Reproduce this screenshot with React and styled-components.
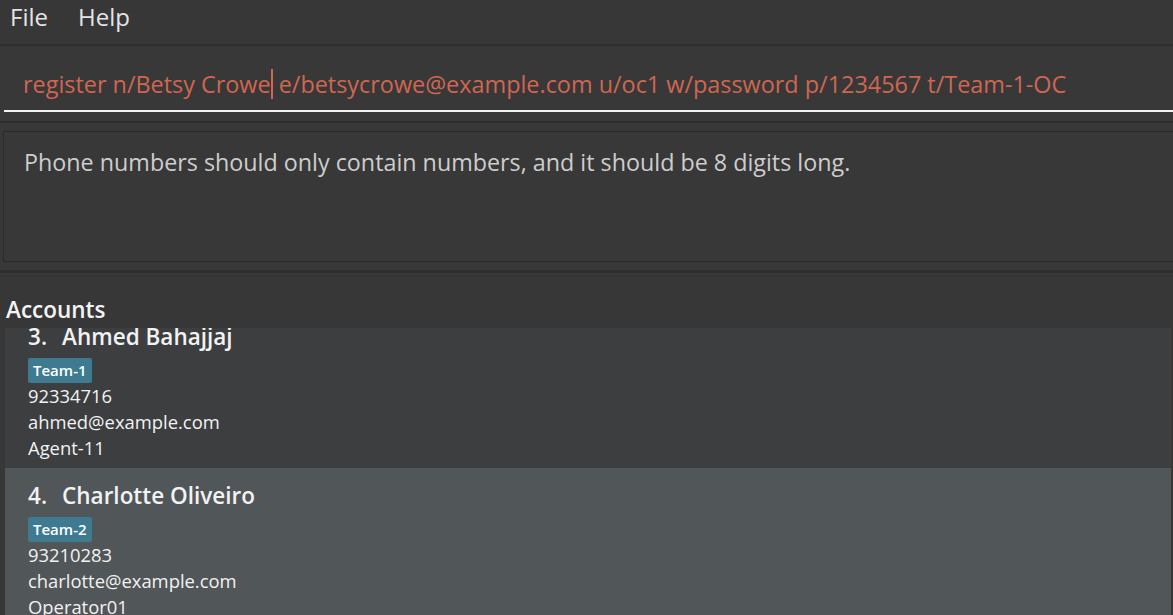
import styled, { createGlobalStyle } from "styled-components";

const GlobalStyle = createGlobalStyle`
    html, body {
        margin: 0;
        padding: 0;
        background: #383838;
    }
    body {
        font-family: "Open Sans", "Noto Sans", sans-serif;
        overflow: hidden;
    }
`

const Window = styled.div`
    display: flex;
    flex-direction: column;
    width: 1173px;
    height: 615px;
    overflow: hidden;
    background: #383838;
`

const MenuBar = styled.div`
    display: flex;
    align-items: flex-start;
    gap: 30px;
    height: 46px;
    box-sizing: border-box;
    padding: 1px 0 0 10px;
    background: #373737;
    border-bottom: 2px solid #2d2d2d;
`

const MenuItem = styled.span`
    font-size: 24px;
    line-height: 32px;
    color: #e4e4e4;
`

const CommandSection = styled.div`
    height: 75px;
    padding-left: 4px;
    border-bottom: 2px solid #2e2e2e;
`

const CommandBox = styled.div`
    display: flex;
    align-items: center;
    height: 66px;
    box-sizing: border-box;
    padding: 12px 0 0 19px;
    border-bottom: 2px solid #f2f2f2;
    font-size: 23.4px;
    color: #d06651;
    white-space: pre;
`

const Caret = styled.span`
    display: inline-block;
    width: 2px;
    height: 30px;
    background: #d06651;
`

const ResultSection = styled.div`
    padding: 8px 0 8px 3px;
    border-bottom: 2px solid #2e2e2e;
`

const ResultBox = styled.div`
    height: 131px;
    padding: 14px 20px;
    box-sizing: border-box;
    border: 1px solid #2b2b2b;
    border-right: none;
    font-size: 23.3px;
    line-height: 32px;
    color: #cdcdcd;
`

const Separator = styled.div`
    height: 2px;
    border-top: 1px solid #2e2e2e;
    border-bottom: 1px solid #333;
`

const AccountsPanel = styled.div`
    flex: 1;
    display: flex;
    flex-direction: column;
    min-height: 0;
    padding-top: 19px;
    background: #373737;
`

const PanelTitle = styled.div`
    height: 33px;
    padding-left: 6px;
    font-size: 22.5px;
    font-weight: 600;
    color: #f4f4f4;
    line-height: 30px;
`

const ListViewport = styled.div`
    flex: 1;
    min-height: 0;
    margin-left: 5px;
    margin-right: 2px;
    overflow: hidden;
`

const ListTrack = styled.div`
    margin-top: ${(p) => -p.$offset}px;
`

const Card = styled.div`
    height: 159px;
    box-sizing: border-box;
    padding: 14px 0 6px 23px;
    background: ${(p) => (p.$odd ? "#515658" : "#3c3e40")};
    color: #f2f2f2;
`

const NameRow = styled.div`
    display: flex;
    gap: 15px;
    height: 27px;
    line-height: 27px;
    font-size: 22.5px;
    font-weight: 600;
`

const Tags = styled.div`
    display: flex;
    gap: 6px;
    margin-top: 8px;
`

const Tag = styled.span`
    height: 25px;
    line-height: 25px;
    padding: 0 5px;
    border-radius: 2px;
    background: #3e7b91;
    color: #ffffff;
    font-size: 15px;
    font-weight: 600;
`

const Field = styled.div`
    height: 26px;
    line-height: 26px;
    font-size: 18.4px;
`

const accounts = [
    { id: 3, name: "Ahmed Bahajjaj", tags: ["Team-1"], phone: "92334716", email: "ahmed@example.com", role: "Agent-11" },
    { id: 4, name: "Charlotte Oliveiro", tags: ["Team-2"], phone: "93210283", email: "charlotte@example.com", role: "Operator01" },
]

function App() {
    return (
        <Window>
            <GlobalStyle />
            <MenuBar>
                <MenuItem>File</MenuItem>
                <MenuItem>Help</MenuItem>
            </MenuBar>
            <CommandSection>
                <CommandBox>
                    <span>register n/Betsy Crowe</span>
                    <Caret />
                    <span>{" e/betsycrowe@example.com u/oc1 w/password p/1234567 t/Team-1-OC"}</span>
                </CommandBox>
            </CommandSection>
            <ResultSection>
                <ResultBox>
                    Phone numbers should only contain numbers, and it should be 8 digits long.
                </ResultBox>
            </ResultSection>
            <Separator />
            <AccountsPanel>
                <PanelTitle>Accounts</PanelTitle>
                <ListViewport>
                    <ListTrack $offset={19}>
                        {accounts.map((a) => (
                            <Card key={a.id} $odd={a.id % 2 === 0}>
                                <NameRow>
                                    <span>{a.id}.</span>
                                    <span>{a.name}</span>
                                </NameRow>
                                <Tags>
                                    {a.tags.map((t) => (
                                        <Tag key={t}>{t}</Tag>
                                    ))}
                                </Tags>
                                <Field>{a.phone}</Field>
                                <Field>{a.email}</Field>
                                <Field>{a.role}</Field>
                            </Card>
                        ))}
                    </ListTrack>
                </ListViewport>
            </AccountsPanel>
        </Window>
    );
}

export default App;
